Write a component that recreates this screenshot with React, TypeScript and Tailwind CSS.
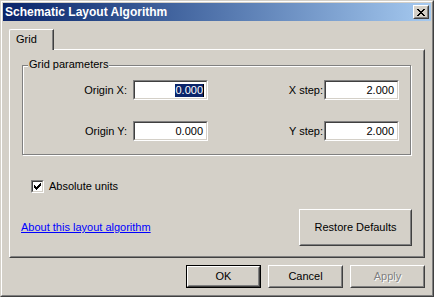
import React from "react";

const FONT = "font-['Liberation_Sans',Arial,sans-serif]";

function Raised({ children, className = "" }: { children?: React.ReactNode; className?: string }) {
  return (
    <div className={`border border-t-white border-l-white border-r-[#404040] border-b-[#404040] bg-[#d4d0c8] ${className}`}>
      <div className="w-full h-full border border-t-[#d4d0c8] border-l-[#d4d0c8] border-r-[#808080] border-b-[#808080] flex items-center justify-center">
        {children}
      </div>
    </div>
  );
}

function TextBox({ value, selected }: { value: string; selected?: boolean }) {
  return (
    <div className="w-[75px] h-[20px] border border-t-[#808080] border-l-[#808080] border-r-white border-b-white">
      <div className={`w-full h-full border border-t-[#404040] border-l-[#404040] border-r-[#d4d0c8] border-b-[#d4d0c8] bg-white flex items-center justify-end ${selected ? "pr-[2px]" : "pr-[3px]"}`}>
        {selected ? (
          <>
            <span className="bg-[#0a246a] text-white leading-[13px]">{value}</span>
            <span className="w-px h-[13px] bg-black"></span>
          </>
        ) : (
          <span className="leading-[13px]">{value}</span>
        )}
      </div>
    </div>
  );
}

function CloseGlyph() {
  const rows = [0, 1, 2, 3, 4, 5, 6];
  return (
    <svg width="8" height="7" viewBox="0 0 8 7" shapeRendering="crispEdges">
      {rows.map((r) => (
        <g key={r}>
          <rect x={r} y={r} width="2" height="1" fill="#000" />
          <rect x={6 - r} y={r} width="2" height="1" fill="#000" />
        </g>
      ))}
    </svg>
  );
}

function CheckGlyph() {
  const px: [number, number, number][] = [
    [6, 0, 1],
    [5, 1, 2],
    [0, 2, 1],
    [4, 2, 3],
    [0, 3, 2],
    [3, 3, 3],
    [0, 4, 5],
    [1, 5, 3],
    [2, 6, 1],
  ];
  return (
    <svg width="7" height="7" viewBox="0 0 7 7" shapeRendering="crispEdges">
      {px.map(([x, y, w], i) => (
        <rect key={i} x={x} y={y} width={w} height="1" fill="#000" />
      ))}
    </svg>
  );
}

export default function App() {
  return (
    <div className={`w-[434px] h-[297px] bg-[#d4d0c8] border border-t-[#d4d0c8] border-l-[#d4d0c8] border-r-[#404040] border-b-[#404040] text-[11px] leading-[13px] text-black ${FONT}`}>
      <div className="w-full h-full border border-t-white border-l-white border-r-[#808080] border-b-[#808080] p-px flex flex-col">
        {/* Title bar */}
        <div className="h-[18px] bg-linear-to-r from-[#0a246a] to-[#a6caf0] flex items-center justify-between pl-[2px] pr-[2px]">
          <span className="text-white font-bold text-[12px] leading-[14px]">Schematic Layout Algorithm</span>
          <Raised className="w-[16px] h-[14px]">
            <CloseGlyph />
          </Raised>
        </div>

        {/* Body */}
        <div className="flex-1 flex flex-col pt-[8px] px-[6px] pb-[6px]">
          {/* Tabs */}
          <div className="flex h-[20px]">
            <div className="relative z-10 w-[45px] h-[21px] bg-[#d4d0c8] border-t border-l border-r border-t-white border-l-white border-r-[#404040] rounded-tl-[2px]">
              <div className="w-full h-full border-r border-r-[#808080] pl-[6px] pt-[3px]">Grid</div>
            </div>
          </div>

          {/* Panel */}
          <div className="flex-1 border border-t-white border-l-white border-r-[#404040] border-b-[#404040]">
            <div className="w-full h-full border border-t-[#d4d0c8] border-l-[#d4d0c8] border-r-[#808080] border-b-[#808080] flex flex-col">
              {/* Group box */}
              <div className="relative mt-[14px] ml-[11px] mr-[12px] h-[90px] border border-[#808080] shadow-[inset_1px_1px_0_#fff,1px_1px_0_#fff] pt-[14px] flex flex-col gap-[21px]">
                <span className="absolute left-[5px] -top-[8px] px-px bg-[#d4d0c8]">Grid parameters</span>
                <div className="flex items-center h-[20px]">
                  <div className="w-[104px] text-right">Origin X:</div>
                  <div className="ml-[6px]">
                    <TextBox value="0.000" selected />
                  </div>
                  <div className="w-[115px] text-right">X step:</div>
                  <div className="ml-px">
                    <TextBox value="2.000" />
                  </div>
                </div>
                <div className="flex items-center h-[20px]">
                  <div className="w-[104px] text-right">Origin Y:</div>
                  <div className="ml-[6px]">
                    <TextBox value="0.000" />
                  </div>
                  <div className="w-[115px] text-right">Y step:</div>
                  <div className="ml-px">
                    <TextBox value="2.000" />
                  </div>
                </div>
              </div>

              {/* Checkbox */}
              <div className="mt-[25px] ml-[20px] flex items-center gap-[5px]">
                <div className="w-[13px] h-[13px] border border-t-[#808080] border-l-[#808080] border-r-white border-b-white">
                  <div className="w-full h-full border border-t-[#404040] border-l-[#404040] border-r-[#d4d0c8] border-b-[#d4d0c8] bg-white flex items-center justify-center">
                    <CheckGlyph />
                  </div>
                </div>
                <span>Absolute units</span>
              </div>

              {/* Link + Restore */}
              <div className="mt-[16px] ml-[10px] mr-[11px] flex items-center justify-between">
                <a className="text-[#0000ff] underline cursor-pointer">About this layout algorithm</a>
                <Raised className="w-[113px] h-[37px]">
                  <span>Restore Defaults</span>
                </Raised>
              </div>
            </div>
          </div>

          {/* Buttons */}
          <div className="mt-[7px] flex justify-end gap-[7px]">
            <div className="w-[75px] h-[23px] border border-black">
              <Raised className="w-full h-full">
                <span>OK</span>
              </Raised>
            </div>
            <Raised className="w-[75px] h-[23px]">
              <span>Cancel</span>
            </Raised>
            <Raised className="w-[75px] h-[23px]">
              <span className="text-[#808080] [text-shadow:1px_1px_0_#fff]">Apply</span>
            </Raised>
          </div>
        </div>
      </div>
    </div>
  );
}
